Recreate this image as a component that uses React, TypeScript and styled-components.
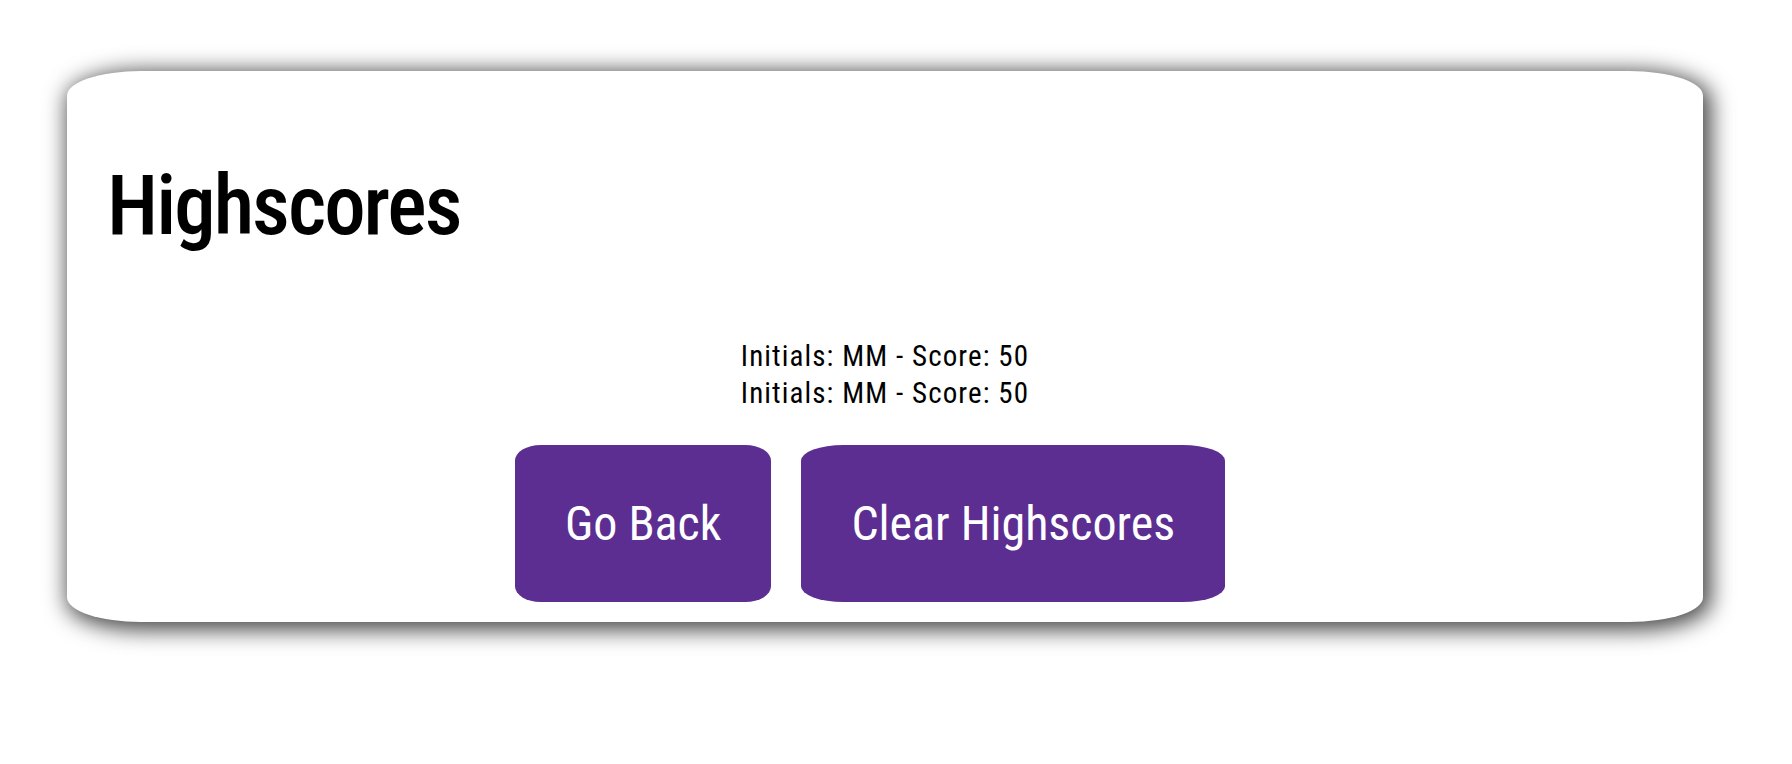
import React from "react";
import styled, { createGlobalStyle } from "styled-components";

const GlobalStyle = createGlobalStyle`
  html, body { margin: 0; padding: 0; background: #ffffff; }
  body { font-family: "Roboto Condensed", Roboto, "Liberation Sans", sans-serif; color: #000; }
`;

const Page = styled.main`
  padding: 71px 89px 40px 67px;
`;

const Card = styled.section`
  background: #ffffff;
  border-radius: 4.5%;
  box-shadow: 4px 4px 22px 4px rgba(0, 0, 0, 0.72);
  height: 551px;
  box-sizing: border-box;
  padding: 87px 40px 0 40px;
  display: flex;
  flex-direction: column;
`;

const Title = styled.h1`
  margin: 0;
  font-size: 83px;
  line-height: 96px;
  font-weight: 500;
  letter-spacing: -2px;
`;

const ScoreList = styled.ol`
  list-style: none;
  margin: 84px 0 0 0;
  padding: 0;
  text-align: center;
`;

const ScoreItem = styled.li`
  font-size: 29px;
  line-height: 37px;
  font-weight: 400;
  letter-spacing: 1.1px;
`;

const Actions = styled.div`
  margin-top: 33px;
  display: flex;
  justify-content: center;
`;

const Button = styled.button`
  height: 157px;
  margin-right: 30px;
  padding: 0 50px;
  border: none;
  border-radius: 10%;
  background: #5c2e91;
  color: #ffffff;
  font-family: "Roboto Condensed", Roboto, sans-serif;
  font-size: 48px;
  cursor: pointer;
`;

const scores = [
  { initials: "MM", score: 50 },
  { initials: "MM", score: 50 },
];

export default function App() {
  return (
    <Page>
      <GlobalStyle />
      <Card>
        <Title>Highscores</Title>
        <ScoreList>
          {scores.map((s, i) => (
            <ScoreItem key={i}>
              Initials: {s.initials} - Score: {s.score}
            </ScoreItem>
          ))}
        </ScoreList>
        <Actions>
          <Button>Go Back</Button>
          <Button>Clear Highscores</Button>
        </Actions>
      </Card>
    </Page>
  );
}
